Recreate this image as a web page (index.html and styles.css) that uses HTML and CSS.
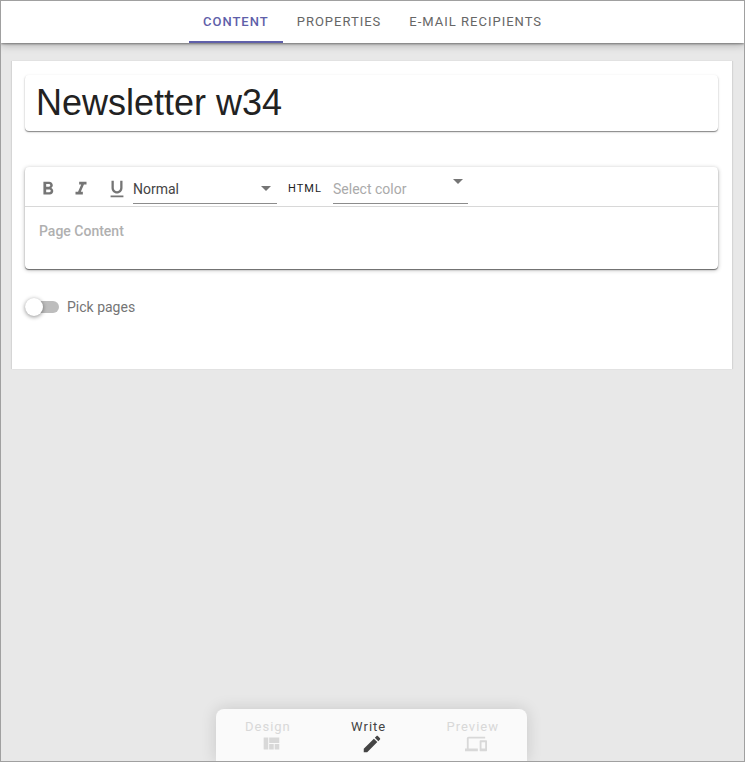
FILE: index.html
```html
<!DOCTYPE html>
<html lang="en">
<head>
<meta charset="utf-8">
<title>Newsletter editor</title>
<link rel="stylesheet" href="styles.css">
</head>
<body>
<div class="app">
  <header class="tabs" role="tablist">
    <button class="tab active" role="tab" aria-selected="true">CONTENT</button>
    <button class="tab" role="tab">PROPERTIES</button>
    <button class="tab" role="tab">E-MAIL RECIPIENTS</button>
  </header>
  <main class="page">
    <input class="title" type="text" aria-label="Title" value="Newsletter w34">
    <section class="editor">
      <div class="toolbar">
        <button class="tool" aria-label="Bold"><svg viewBox="0 0 24 24"><path d="M15.6 10.79c.97-.67 1.65-1.77 1.65-2.79 0-2.26-1.75-4-4-4H7v14h7.04c2.09 0 3.71-1.7 3.71-3.79 0-1.52-.86-2.82-2.15-3.42zM10 6.5h3c.83 0 1.5.67 1.5 1.5s-.67 1.5-1.5 1.5h-3v-3zm3.500 9H10v-3h3.500c.83 0 1.500.67 1.500 1.500s-.67 1.500-1.500 1.500z"/></svg></button>
        <button class="tool" aria-label="Italic"><svg viewBox="0 0 24 24"><path d="M10 4v3h2.210l-3.420 8H6v3h8v-3h-2.210l3.420-8H18V4z"/></svg></button>
        <button class="tool" aria-label="Underline"><svg viewBox="0 0 24 24"><path d="M12 17c3.310 0 6-2.690 6-6V3h-2.500v8c0 1.930-1.570 3.500-3.500 3.500S8.500 12.930 8.500 11V3H6v8c0 3.310 2.690 6 6 6zm-7 2v2h14v-2H5z"/></svg></button>
        <span class="picker">
          <select aria-label="Text style"><option>Normal</option></select>
          <svg class="arrow" viewBox="0 0 10 5"><path d="M0 0h10L5 5z"/></svg>
        </span>
        <button class="html">HTML</button>
        <span class="picker color">
          <select aria-label="Color"><option>Select color</option></select>
          <svg class="arrow" viewBox="0 0 10 5"><path d="M0 0h10L5 5z"/></svg>
        </span>
      </div>
      <textarea class="body" aria-label="Page Content" placeholder="Page Content"></textarea>
    </section>
    <label class="switch"><input type="checkbox" role="switch">Pick pages</label>
  </main>
  <nav class="modes">
    <button class="mode">Design
      <svg viewBox="0 0 24 24"><path d="M10 18h5v-6h-5v6zm-6 0h5V5H4v13zm12 0h5v-6h-5v6zM10 5v6h11V5H10z"/></svg></button>
    <button class="mode active">Write
      <svg viewBox="0 0 24 24"><path d="M3 17.250V21h3.750L17.810 9.940l-3.750-3.750L3 17.250zM20.710 7.040c.39-.39.39-1.020 0-1.410l-2.340-2.340c-.39-.39-1.020-.39-1.410 0l-1.830 1.830 3.750 3.750 1.830-1.830z"/></svg></button>
    <button class="mode">Preview
      <svg viewBox="0 0 24 24"><path d="M4 6h18V4H4c-1.100 0-2 .9-2 2v11H0v3h14v-3H4V6zm19 2h-6c-.55 0-1 .45-1 1v10c0 .55.45 1 1 1h6c.55 0 1-.45 1-1V9c0-.55-.45-1-1-1zm-1 9h-4v-7h4v7z"/></svg></button>
  </nav>
</div>
</body>
</html>
```
FILE: styles.css
```css
* {
  box-sizing: border-box;
}

body {
  margin: 0;
  font-family: Roboto, sans-serif;
  font-size: 14px;
  color: #222;
}

button,
input,
select,
textarea {
  margin: 0;
  padding: 0;
  border: 0;
  background: none;
  font: inherit;
  color: inherit;
}

svg {
  display: block;
  fill: currentColor;
}

.app {
  display: flex;
  flex-direction: column;
  min-height: 100vh;
  border: 1px solid #a0a0a0;
  background: #e8e8e8;
  overflow: hidden;
}

.tabs {
  display: flex;
  justify-content: center;
  height: 42px;
  background: #fff;
  box-shadow: 0 1px 2px rgba(0, 0, 0, .4), 0 2px 8px rgba(0, 0, 0, .25);
}

.tab {
  padding: 0 14px;
  border-bottom: 2px solid transparent;
  font-size: 13px;
  letter-spacing: 1px;
  color: #666;
}

.tab.active {
  font-weight: 500;
  color: #5f5fa9;
  border-color: #5f5fa9;
}

.page {
  display: flex;
  flex-direction: column;
  margin: 18px 12px 0 11px;
  padding: 14px 14px 52px 13px;
  background: #fff;
  box-shadow: 1px 0 1px rgba(0, 0, 0, .08), -1px 0 1px rgba(0, 0, 0, .08);
}

.title {
  width: 100%;
  height: 56px;
  padding: 0 11px;
  border-radius: 4px;
  font-family: "Liberation Sans", Arial, sans-serif;
  font-size: 36px;
  box-shadow: 0 1px 1px rgba(0, 0, 0, .4), 0 1px 3px rgba(0, 0, 0, .16);
}

.editor {
  margin-top: 36px;
  border-radius: 4px;
  box-shadow: 0 1px 1px rgba(0, 0, 0, .5), 0 1px 4px rgba(0, 0, 0, .3);
}

.toolbar {
  display: flex;
  align-items: center;
  height: 40px;
  padding: 4px 0 0 12px;
  border-bottom: 1px solid #d8d8d8;
}

.tool {
  width: 22px;
  margin-right: 11px;
  color: #757575;
}

.tool svg {
  width: 22px;
  height: 22px;
}

.tool + .tool + .tool {
  margin: 0 5px 0 3px;
}

.picker {
  position: relative;
  width: 144px;
  height: 30px;
  border-bottom: 1px solid #8c8c8c;
}

.picker select {
  width: 100%;
  height: 100%;
  padding-top: 2px;
  appearance: none;
  color: #444;
}

.picker .arrow {
  position: absolute;
  top: 12px;
  right: 6px;
  width: 10px;
  height: 5px;
  color: #757575;
  pointer-events: none;
}

.picker.color {
  width: 135px;
}

.picker.color select {
  color: #aaa;
}

.picker.color .arrow {
  top: 5px;
  right: 5px;
}

.html {
  width: 56px;
  font-size: 11px;
  letter-spacing: 1px;
}

.body {
  display: block;
  width: 100%;
  height: 62px;
  padding: 16px 14px;
  resize: none;
  line-height: 16px;
}

.body::placeholder {
  font-weight: 500;
  color: #b0b0b0;
}

.switch {
  display: flex;
  align-items: center;
  align-self: flex-start;
  gap: 8px;
  height: 20px;
  margin-top: 28px;
  color: #757575;
}

.switch input {
  position: relative;
  width: 34px;
  height: 12px;
  appearance: none;
  border-radius: 6px;
  background: #bdbdbd;
}

.switch input::before {
  content: "";
  position: absolute;
  top: -3px;
  left: 0;
  width: 18px;
  height: 18px;
  border-radius: 50%;
  background: #fff;
  box-shadow: 0 1px 4px rgba(0, 0, 0, .45);
}

.switch input:checked::before {
  left: 16px;
}

.modes {
  display: flex;
  justify-content: space-between;
  align-self: center;
  width: 311px;
  height: 52px;
  margin: auto 2px 0 0;
  padding: 10px 28px 0 29px;
  border-radius: 8px 8px 0 0;
  background: #fafafa;
  box-shadow: 0 0 16px rgba(0, 0, 0, .14);
}

.mode {
  display: flex;
  flex-direction: column;
  align-items: center;
  font-size: 13px;
  line-height: 16px;
  letter-spacing: 1px;
  color: #d8d8d8;
}

.mode svg {
  width: 22px;
  height: 22px;
  margin: -2px 0 0 6px;
}

.mode.active {
  color: #444;
}
```
